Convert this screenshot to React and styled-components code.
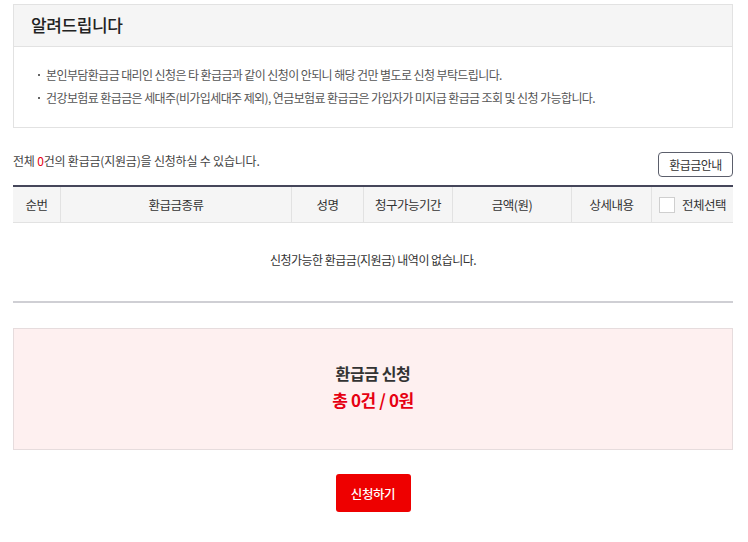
import React from "react";
import styled, { createGlobalStyle } from "styled-components";

const Global = createGlobalStyle`
  html, body { margin: 0; padding: 0; background: #fff; }
  body { font-family: "Noto Sans CJK KR", "Noto Sans", sans-serif; color: #333; }
  * { box-sizing: border-box; }
`;

const Page = styled.div`
  width: 748px;
  padding: 4px 15px 0 13px;
  display: flex;
  flex-direction: column;
`;

const Notice = styled.section`
  border: 1px solid #e2e2e2;
`;

const NoticeHead = styled.div`
  height: 42px;
  background: #f5f5f5;
  border-bottom: 1px solid #e2e2e2;
  display: flex;
  align-items: center;
  padding-left: 17px;
  padding-bottom: 3px;
  font-size: 17px;
  font-weight: 500;
  color: #222;
  letter-spacing: -0.4px;
`;

const NoticeList = styled.ul`
  list-style: none;
  margin: 0;
  padding: 16px 0 18px 24px;
`;

const NoticeItem = styled.li`
  position: relative;
  padding-left: 8px;
  font-size: 12px;
  line-height: 23px;
  color: #555;
  letter-spacing: -0.6px;
  &::before {
    content: "";
    position: absolute;
    left: 0;
    top: 11px;
    width: 2px;
    height: 2px;
    background: #666;
  }
`;

const SummaryRow = styled.div`
  margin-top: 24px;
  display: flex;
  justify-content: space-between;
  align-items: center;
  height: 25px;
`;

const SummaryText = styled.p`
  margin: 0;
  font-size: 12px;
  color: #444;
  letter-spacing: -0.2px;
  position: relative;
  top: -4px;
`;

const Red = styled.span`
  color: #e60012;
`;

const GuideButton = styled.button`
  width: 75px;
  height: 25px;
  border: 1px solid #5b5e6b;
  border-radius: 4px;
  background: #fff;
  font-family: inherit;
  font-size: 12px;
  color: #333;
  padding: 0;
  letter-spacing: -0.5px;
`;

const Table = styled.div`
  margin-top: 8px;
  border-top: 2px solid #45465a;
  border-bottom: 2px solid #cfcfd4;
`;

const HeadRow = styled.div`
  display: grid;
  grid-template-columns: 47px 231px 72px 89px 119px 80px 1fr;
  height: 36px;
  background: #f5f5f5;
  border-bottom: 1px solid #e2e2e2;
`;

const HeadCell = styled.div`
  display: flex;
  align-items: center;
  justify-content: center;
  gap: 7px;
  font-size: 12.5px;
  color: #333;
  letter-spacing: -0.5px;
  border-left: ${(p) => (p.$first ? "none" : "1px solid #e2e2e2")};
`;

const Check = styled.span`
  width: 16px;
  height: 16px;
  border: 1px solid #cfcfcf;
  background: #fff;
  display: inline-block;
`;

const EmptyRow = styled.div`
  height: 78px;
  display: flex;
  align-items: center;
  justify-content: center;
  font-size: 12px;
  color: #333;
  letter-spacing: -0.5px;
  padding-bottom: 5px;
`;

const ApplyBox = styled.section`
  margin-top: 25px;
  height: 122px;
  background: #fef0f0;
  border: 1px solid #e6dcdd;
  display: flex;
  flex-direction: column;
  align-items: center;
  justify-content: center;
  gap: 3px;
  padding-bottom: 6px;
`;

const ApplyTitle = styled.div`
  font-size: 16px;
  font-weight: 700;
  color: #333;
  line-height: 23px;
  letter-spacing: -0.4px;
`;

const ApplyTotal = styled.div`
  font-size: 17px;
  font-weight: 700;
  color: #e60012;
  line-height: 23px;
  letter-spacing: -0.4px;
`;

const Actions = styled.div`
  margin-top: 24px;
  display: flex;
  justify-content: center;
`;

const SubmitButton = styled.button`
  width: 75px;
  height: 38px;
  border: none;
  border-radius: 3px;
  background: #ee0000;
  color: #fff;
  font-family: inherit;
  font-size: 12.5px;
  font-weight: 500;
  padding: 0;
  letter-spacing: -0.4px;
`;

const columns = ["순번", "환급금종류", "성명", "청구가능기간", "금액(원)", "상세내용"];

export default function App() {
  return (
    <>
      <Global />
      <Page>
        <Notice>
          <NoticeHead>알려드립니다</NoticeHead>
          <NoticeList>
            <NoticeItem>본인부담환급금 대리인 신청은 타 환급금과 같이 신청이 안되니 해당 건만 별도로 신청 부탁드립니다.</NoticeItem>
            <NoticeItem>건강보험료 환급금은 세대주(비가입세대주 제외), 연금보험료 환급금은 가입자가 미지급 환급금 조회 및 신청 가능합니다.</NoticeItem>
          </NoticeList>
        </Notice>

        <SummaryRow>
          <SummaryText>
            전체 <Red>0</Red>건의 환급금(지원금)을 신청하실 수 있습니다.
          </SummaryText>
          <GuideButton>환급금안내</GuideButton>
        </SummaryRow>

        <Table>
          <HeadRow>
            {columns.map((c, i) => (
              <HeadCell key={c} $first={i === 0}>{c}</HeadCell>
            ))}
            <HeadCell>
              <Check />
              전체선택
            </HeadCell>
          </HeadRow>
          <EmptyRow>신청가능한 환급금(지원금) 내역이 없습니다.</EmptyRow>
        </Table>

        <ApplyBox>
          <ApplyTitle>환급금 신청</ApplyTitle>
          <ApplyTotal>총 0건 / 0원</ApplyTotal>
        </ApplyBox>

        <Actions>
          <SubmitButton>신청하기</SubmitButton>
        </Actions>
      </Page>
    </>
  );
}
